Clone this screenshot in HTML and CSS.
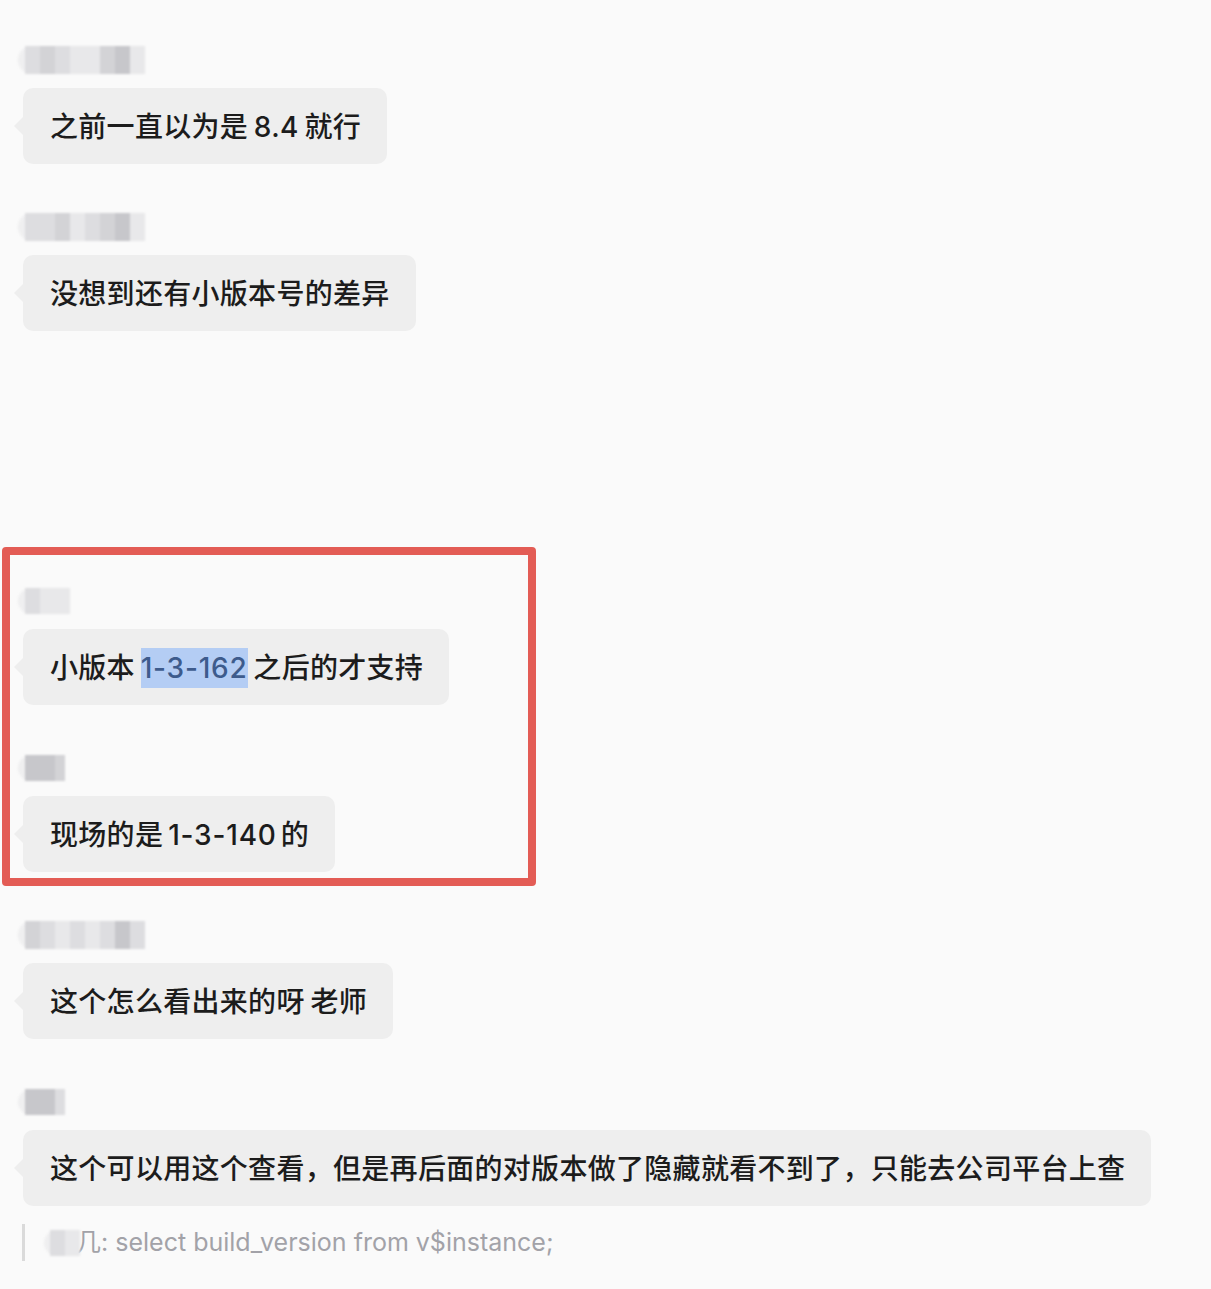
FILE: index.html
```html
<!DOCTYPE html>
<html lang="zh-CN">
<head>
<meta charset="utf-8">
<title>群聊记录</title>
<link rel="stylesheet" href="styles.css">
</head>
<body>
<main class="chat">
  <div class="msg">
    <div class="name"><i class="t2"></i><i class="t3"></i><i class="t2"></i><i class="t1"></i><i class="t1"></i><i class="t3"></i><i class="t4"></i><i class="t1"></i></div>
    <div class="bubble">之前一直以为是 8.4 就行</div>
  </div>
  <div class="msg">
    <div class="name"><i class="t2"></i><i class="t2"></i><i class="t3"></i><i class="t1"></i><i class="t2"></i><i class="t3"></i><i class="t4"></i><i class="t1"></i></div>
    <div class="bubble">没想到还有小版本号的差异</div>
  </div>

  <section class="marked">
    <div class="msg">
      <div class="name short"><i class="t2"></i><i class="t1"></i><i class="t1"></i></div>
      <div class="bubble">小版本 <span class="sel num">1-3-162</span> 之后的才支持</div>
    </div>
    <div class="msg">
      <div class="name short"><i class="t4"></i><i class="t4"></i><i class="t3 narrow"></i></div>
      <div class="bubble">现场的是<span class="num gap">1-3-140</span>的</div>
    </div>
  </section>

  <div class="msg">
    <div class="name"><i class="t3"></i><i class="t2"></i><i class="t1"></i><i class="t2"></i><i class="t1"></i><i class="t2"></i><i class="t4"></i><i class="t2"></i></div>
    <div class="bubble">这个怎么看出来的呀 老师</div>
  </div>
  <div class="msg">
    <div class="name short"><i class="t4"></i><i class="t4"></i><i class="t2 narrow"></i></div>
    <div class="bubble">这个可以用这个查看，但是再后面的对版本做了隐藏就看不到了，只能去公司平台上查</div>
  </div>

  <blockquote class="quote">
    <span class="name inline"><i class="t2"></i><i class="t1"></i></span><span class="quote-text">几: select build_version from v$instance;</span>
  </blockquote>
</main>
</body>
</html>
```

FILE: styles.css
```css
*,
*::before,
*::after {
  box-sizing: border-box;
}

html,
body {
  margin: 0;
  background: #fafafa;
}

body {
  font-family: "Inter", "Noto Sans CJK SC", sans-serif;
  color: #1c1c1c;
}

.chat {
  display: flex;
  flex-direction: column;
  align-items: flex-start;
  padding: 46px 0 40px 23px;
}

.msg {
  display: flex;
  flex-direction: column;
  align-items: flex-start;
}

.msg + .msg,
.marked + .msg {
  margin-top: 49px;
}

/* pixelated sender name */
.name {
  display: flex;
  height: 28px;
  margin: 0 0 14px -5px;
  padding-left: 7px;
  border-radius: 14px 4px 4px 14px;
  background: #efeff0;
  filter: blur(1px);
}

.name.short {
  height: 26px;
  margin-top: 1px;
  margin-bottom: 15px;
}

.name i {
  display: block;
  width: 15px;
  height: 100%;
}

.name i.narrow {
  width: 10px;
}

.name .t1 { background: #e8e8ea; }
.name .t2 { background: #dddde0; }
.name .t3 { background: #d3d3d6; }
.name .t4 { background: #c7c7cb; }

/* message bubble with tail */
.bubble {
  position: relative;
  background: #eeeeee;
  border-radius: 10px;
  padding: 19px 26px 17px 27px;
  font-size: 28px;
  font-weight: 500;
  letter-spacing: 0.3px;
  word-spacing: -2px;
  line-height: 40px;
  white-space: nowrap;
}

.bubble::before {
  content: "";
  position: absolute;
  left: -9px;
  top: 50%;
  margin-top: -9px;
  border-style: solid;
  border-width: 9px 9px 9px 0;
  border-color: transparent #eeeeee transparent transparent;
}

.num {
  letter-spacing: 0.8px;
}

.num.gap {
  margin: 0 4px 0 5px;
}

.sel {
  display: inline-block;
  background: #b4cdf4;
  color: #3d5b8c;
}

/* annotated group */
.marked {
  position: relative;
  margin-top: 256px;
  display: flex;
  flex-direction: column;
  align-items: flex-start;
}

.marked::after {
  content: "";
  position: absolute;
  left: -21px;
  top: -40px;
  width: 534px;
  bottom: -14px;
  border: 8px solid #e35c55;
  border-radius: 4px;
  pointer-events: none;
}

/* quoted reply */
.quote {
  display: flex;
  align-items: center;
  margin: 18px 0 0 -1px;
  padding-left: 19px;
  height: 37px;
  border-left: 3px solid #dadada;
  font-size: 25px;
  line-height: 37px;
  color: #a2a2a8;
}

.name.inline {
  height: 26px;
  margin: 0;
  padding-left: 6px;
  border-radius: 13px 4px 4px 13px;
}

.quote-text {
  margin-left: -4px;
}
```
